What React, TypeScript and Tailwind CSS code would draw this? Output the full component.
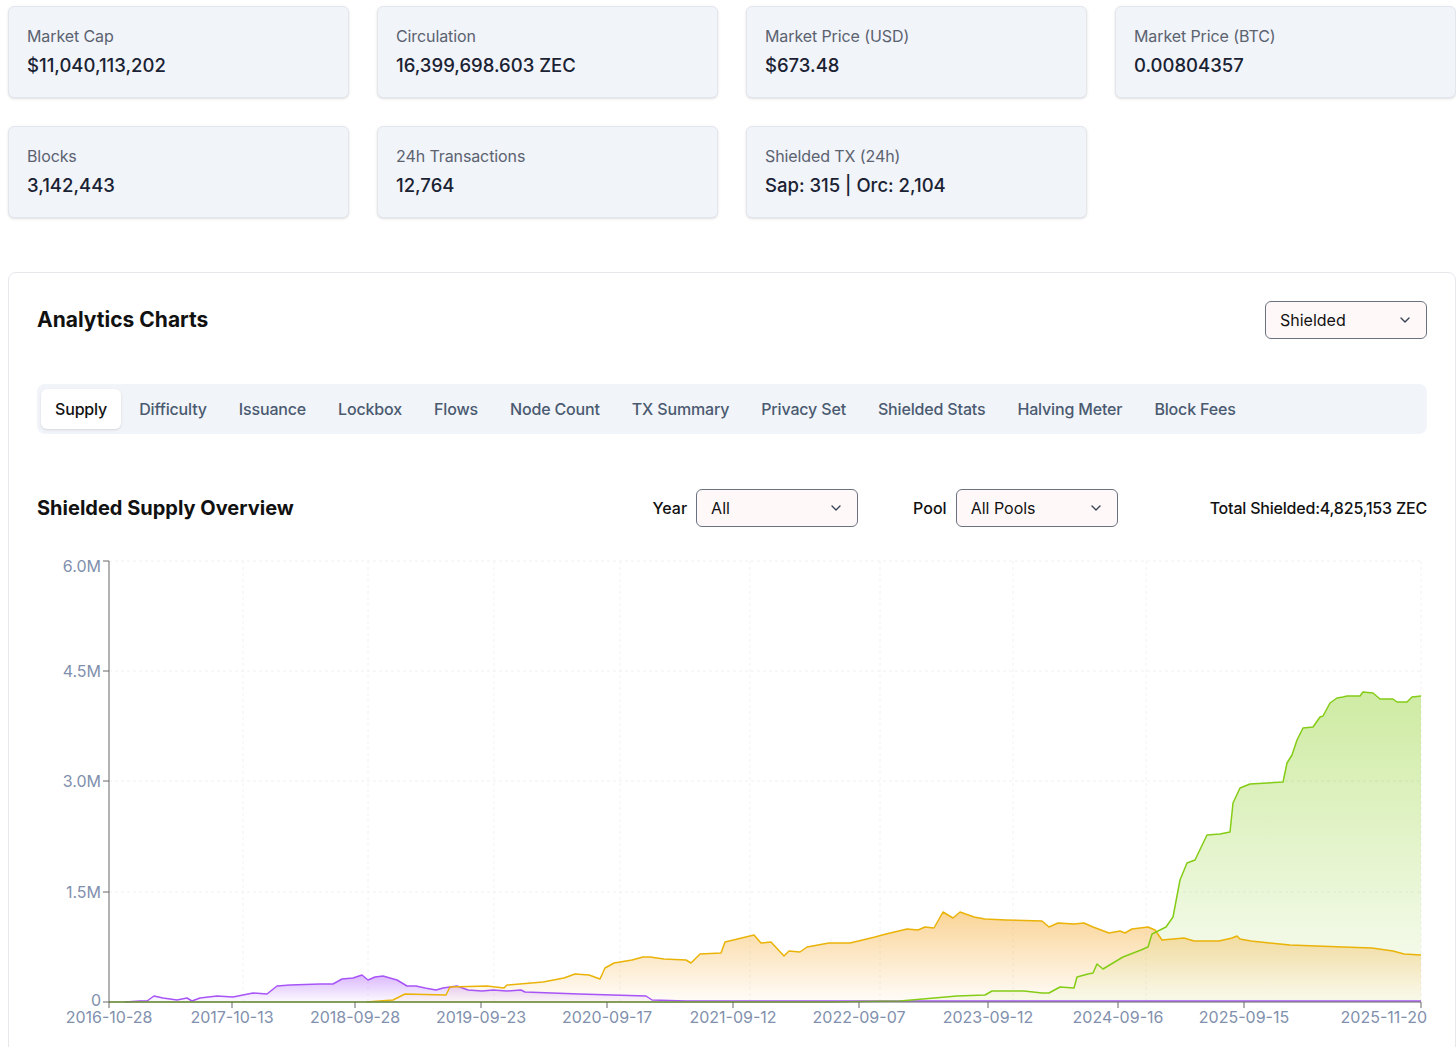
import React from 'react';
import { ChevronDown } from 'lucide-react';

type Pt = [number, number];

// chart uses page pixel coords directly (svg viewBox starts at 37,550)
const BASE = 1002;
const LEFT = 109;
const RIGHT = 1421;

const purple: Pt[] = [
  [125, 1002], [140, 1001], [147, 1001], [154, 996], [163, 998], [177, 1000], [187, 998], [192, 1001],
  [200, 998], [217, 996], [233, 997], [253, 993], [267, 994], [277, 986], [290, 985], [320, 984],
  [333, 984], [342, 979], [353, 978], [362, 975], [368, 980], [375, 977], [383, 976], [397, 980],
  [407, 986], [416, 986], [425, 988], [436, 990], [443, 988], [457, 986], [468, 990], [482, 991],
  [493, 990], [507, 991], [521, 990], [525, 992], [579, 994], [646, 996], [652, 1000], [686, 1001],
  [1421, 1001],
];

const orange: Pt[] = [
  [366, 1002], [393, 1000], [405, 994], [446, 995], [450, 987], [487, 986], [504, 988], [507, 985],
  [543, 982], [564, 978], [575, 974], [589, 975], [600, 979], [605, 968], [614, 963], [632, 960],
  [643, 957], [650, 957], [664, 959], [686, 960], [691, 963], [700, 954], [721, 953], [725, 942],
  [754, 935], [761, 943], [771, 942], [784, 956], [789, 951], [800, 952], [807, 947], [829, 943],
  [850, 943], [875, 937], [886, 934], [907, 929], [918, 930], [925, 927], [934, 928], [943, 912],
  [953, 918], [960, 912], [974, 917], [985, 919], [1006, 920], [1042, 921], [1049, 927], [1058, 923],
  [1074, 924], [1084, 923], [1093, 927], [1109, 933], [1120, 931], [1125, 933], [1132, 929],
  [1148, 927], [1155, 930], [1162, 940], [1173, 939], [1184, 938], [1194, 941], [1219, 941],
  [1232, 938], [1237, 936], [1240, 939], [1251, 941], [1290, 945], [1343, 947], [1372, 948],
  [1393, 951], [1404, 954], [1421, 955],
];

const green: Pt[] = [
  [109, 1002], [830, 1002], [900, 1001], [957, 996], [985, 995], [992, 991], [1024, 991], [1042, 993],
  [1049, 993], [1060, 987], [1074, 988], [1077, 977], [1088, 974], [1093, 973], [1097, 964],
  [1103, 969], [1123, 957], [1141, 950], [1148, 947], [1152, 934], [1166, 927], [1173, 917],
  [1180, 880], [1187, 863], [1195, 860], [1207, 835], [1220, 834], [1230, 832], [1233, 803],
  [1240, 788], [1250, 784], [1283, 782], [1287, 763], [1292, 755], [1297, 740], [1303, 728],
  [1313, 727], [1320, 717], [1323, 716], [1330, 703], [1337, 698], [1343, 697], [1347, 696],
  [1360, 696], [1363, 692], [1373, 693], [1380, 699], [1393, 699], [1397, 702], [1407, 702],
  [1412, 697], [1421, 696],
];

const linePath = (pts: Pt[]) => 'M' + pts.map((p) => p.join(',')).join('L');
const areaPath = (pts: Pt[]) =>
  linePath(pts) + `L${pts[pts.length - 1][0]},${BASE}L${pts[0][0]},${BASE}Z`;

const yTicks = [
  { y: 561, label: '6.0M', dy: 11 },
  { y: 671, label: '4.5M', dy: 6 },
  { y: 781, label: '3.0M', dy: 6 },
  { y: 892, label: '1.5M', dy: 6 },
  { y: 1002, label: '0', dy: 4 },
];

const xTicks = [
  { x: 109, label: '2016-10-28' },
  { x: 232, label: '2017-10-13' },
  { x: 355, label: '2018-09-28' },
  { x: 481, label: '2019-09-23' },
  { x: 607, label: '2020-09-17' },
  { x: 733, label: '2021-09-12' },
  { x: 859, label: '2022-09-07' },
  { x: 988, label: '2023-09-12' },
  { x: 1118, label: '2024-09-16' },
  { x: 1244, label: '2025-09-15' },
  { x: 1421, label: '2025-11-20' },
];

const gridX = [243, 368, 494, 620, 750, 880, 1013, 1146, 1421];

const stats = [
  { label: 'Market Cap', value: '$11,040,113,202' },
  { label: 'Circulation', value: '16,399,698.603 ZEC' },
  { label: 'Market Price (USD)', value: '$673.48' },
  { label: 'Market Price (BTC)', value: '0.00804357' },
  { label: 'Blocks', value: '3,142,443' },
  { label: '24h Transactions', value: '12,764' },
  { label: 'Shielded TX (24h)', value: 'Sap: 315 | Orc: 2,104' },
];

const tabs = [
  'Supply', 'Difficulty', 'Issuance', 'Lockbox', 'Flows', 'Node Count',
  'TX Summary', 'Privacy Set', 'Shielded Stats', 'Halving Meter', 'Block Fees',
];

function Select({ value }: { value: string }) {
  return (
    <div className="flex h-[38px] w-[162px] items-center justify-between rounded-md border border-gray-500 bg-[#fff8f8] pl-[14px] pr-[13px] text-base text-[#111]">
      <span>{value}</span>
      <ChevronDown size={16} strokeWidth={2} className="text-gray-700" />
    </div>
  );
}

function SupplyChart() {
  return (
    <svg width={1390} height={497} viewBox="37 550 1390 497" className="mt-[23px] block">
      <defs>
        <linearGradient id="fillGreen" x1="0" y1="0" x2="0" y2="1">
          <stop offset="5%" stopColor="#84cc16" stopOpacity={0.38} />
          <stop offset="95%" stopColor="#84cc16" stopOpacity={0.06} />
        </linearGradient>
        <linearGradient id="fillOrange" x1="0" y1="0" x2="0" y2="1">
          <stop offset="5%" stopColor="#f5a524" stopOpacity={0.45} />
          <stop offset="95%" stopColor="#f5a524" stopOpacity={0.05} />
        </linearGradient>
        <linearGradient id="fillPurple" x1="0" y1="0" x2="0" y2="1">
          <stop offset="5%" stopColor="#a855f7" stopOpacity={0.4} />
          <stop offset="95%" stopColor="#a855f7" stopOpacity={0.05} />
        </linearGradient>
      </defs>

      {/* grid */}
      {yTicks.slice(0, 4).map((t) => (
        <line key={t.y} x1={LEFT} x2={RIGHT} y1={t.y} y2={t.y} stroke="#eef0f3" strokeDasharray="3 3" />
      ))}
      {gridX.map((x) => (
        <line key={x} x1={x} x2={x} y1={561} y2={BASE} stroke="#f1f2f4" strokeDasharray="3 3" />
      ))}

      {/* areas */}
      <path d={areaPath(green)} fill="url(#fillGreen)" />
      <path d={areaPath(orange)} fill="url(#fillOrange)" />
      <path d={areaPath(purple)} fill="url(#fillPurple)" />

      {/* lines */}
      <path d={linePath(purple)} fill="none" stroke="#a855f7" strokeWidth={1.5} strokeLinejoin="round" />
      <path d={linePath(orange)} fill="none" stroke="#eab308" strokeWidth={1.5} strokeLinejoin="round" />
      <path d={linePath(green)} fill="none" stroke="#84cc16" strokeWidth={1.5} strokeLinejoin="round" />

      {/* axes */}
      <line x1={LEFT} x2={LEFT} y1={561} y2={BASE} stroke="#666" />
      <line x1={LEFT} x2={RIGHT} y1={BASE} y2={BASE} stroke="#666" />
      {yTicks.map((t) => (
        <g key={t.label}>
          <line x1={LEFT - 6} x2={LEFT} y1={t.y} y2={t.y} stroke="#666" />
          <text x={LEFT - 8} y={t.y + t.dy} textAnchor="end" fontSize={16} fill="#8190ad" fontFamily="Inter, sans-serif">
            {t.label}
          </text>
        </g>
      ))}
      {xTicks.map((t, i) => (
        <g key={t.label}>
          <line x1={t.x} x2={t.x} y1={BASE} y2={BASE + 6} stroke="#666" />
          <text
            x={i === xTicks.length - 1 ? 1427 : t.x}
            y={1023}
            textAnchor={i === xTicks.length - 1 ? 'end' : 'middle'}
            fontSize={16}
            fill="#8190ad"
            fontFamily="Inter, sans-serif"
          >
            {t.label}
          </text>
        </g>
      ))}
    </svg>
  );
}

export default function App() {
  return (
    <div className="min-h-screen bg-white pl-2 pt-1.5 font-[Inter,sans-serif]">
      <div className="grid w-[1448px] grid-cols-4 gap-7">
        {stats.map((s) => (
          <div
            key={s.label}
            className="rounded-md border border-[#e3e7ed] bg-[#f1f4f9] pb-[18px] pl-[18px] pt-[19px] shadow-sm"
          >
            <div className="text-base leading-5 tracking-[-0.1px] text-[#5b6270]">{s.label}</div>
            <div className="mt-[5px] text-[18.5px] font-medium leading-7 text-[#1a2233]">{s.value}</div>
          </div>
        ))}
      </div>

      <div className="mt-[54px] w-[1448px] rounded-lg border border-gray-200 bg-white px-7 pb-10 pt-7">
        <div className="flex h-[38px] items-center justify-between">
          <h2 className="text-[21px] font-bold text-[#111]">Analytics Charts</h2>
          <Select value="Shielded" />
        </div>

        <div className="mt-[45px] flex h-[50px] items-center gap-1 rounded-lg bg-[#f1f4f9] px-1">
          {tabs.map((t, i) => (
            <div
              key={t}
              className={
                i === 0
                  ? 'flex h-10 items-center rounded-md bg-white px-3.5 text-base font-medium tracking-[-0.16px] text-[#111] shadow-sm'
                  : 'flex h-10 items-center rounded-md px-3.5 text-base font-medium tracking-[-0.16px] text-[#4a5a70]'
              }
            >
              {t}
            </div>
          ))}
        </div>

        <div className="mt-[55px] flex h-[38px] items-center">
          <h3 className="text-xl font-bold text-[#111]">Shielded Supply Overview</h3>
          <div className="ml-auto flex items-center gap-[55px]">
            <div className="flex items-center gap-[9px]">
              <span className="text-base font-medium text-[#111]">Year</span>
              <Select value="All" />
            </div>
            <div className="flex items-center gap-[9px]">
              <span className="text-base font-medium text-[#111]">Pool</span>
              <Select value="All Pools" />
            </div>
          </div>
          <div className="ml-[92px] text-base font-medium tracking-[-0.2px] text-[#111]">
            Total Shielded:4,825,153 ZEC
          </div>
        </div>

        <SupplyChart />
      </div>
    </div>
  );
}
